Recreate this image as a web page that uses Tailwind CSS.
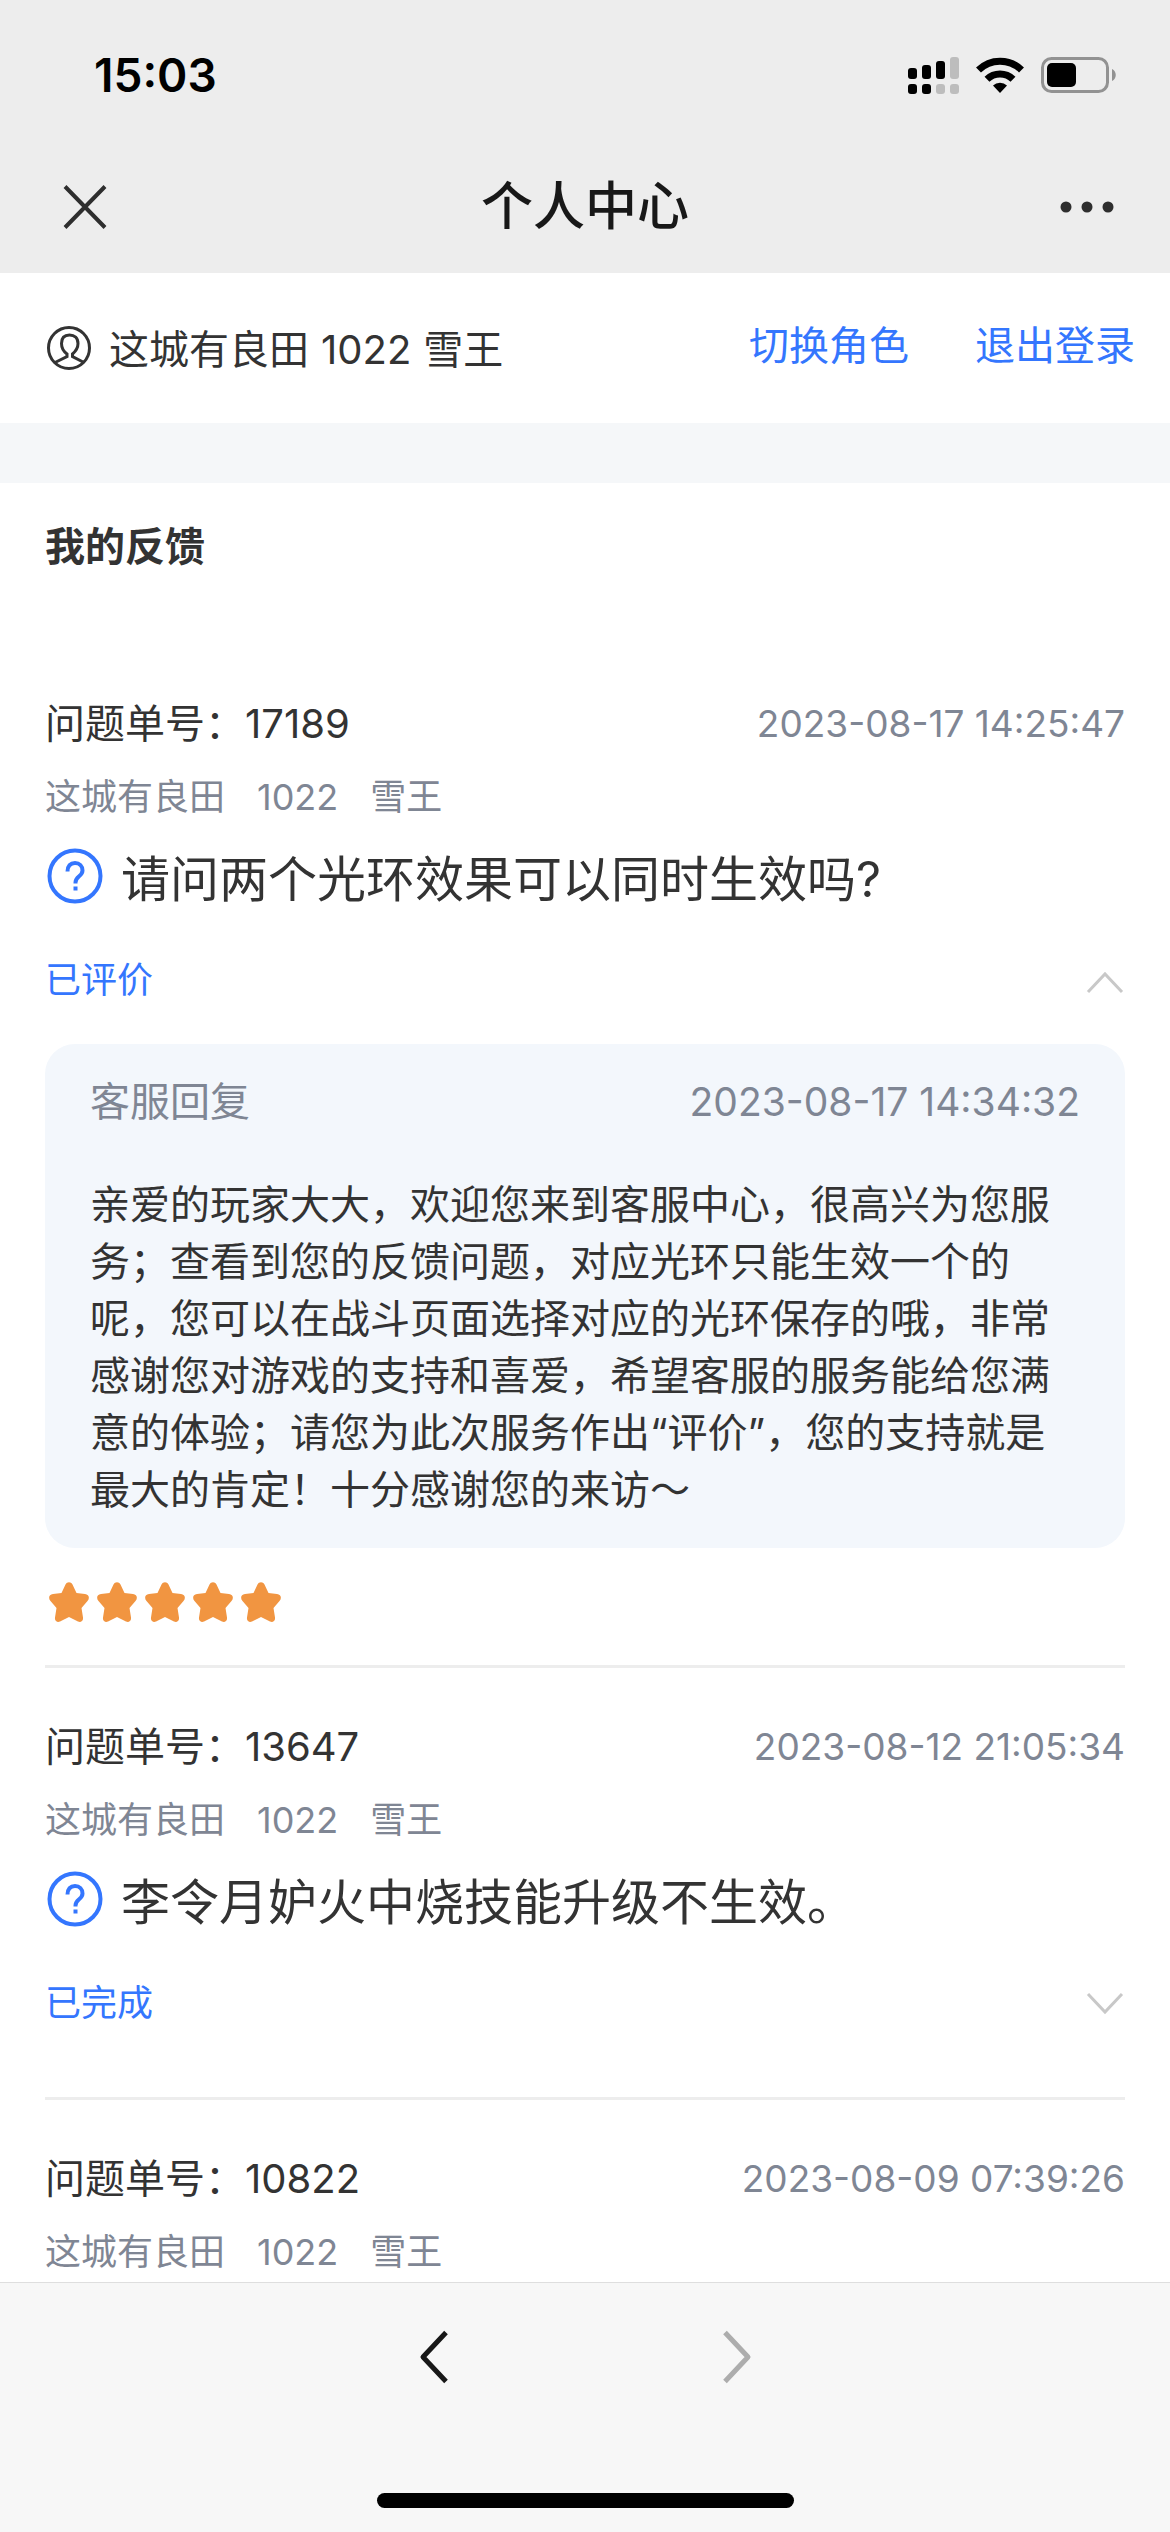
<!DOCTYPE html>
<html lang="zh-CN">
<head>
    <meta charset="UTF-8">
    <meta name="viewport" content="width=device-width, initial-scale=1.0">
    <title>个人中心</title>
    <script src="https://cdn.jsdelivr.net/npm/@tailwindcss/browser@4"></script>
</head>
<body class="h-screen flex flex-col overflow-hidden bg-white text-[#333333] font-['Inter','Noto_Sans_CJK_SC',sans-serif]">

    <!-- Header -->
    <header class="shrink-0 bg-[#ededed]">
        <div class="h-[141px] pt-2 pl-[94px] pr-[54px] flex items-center justify-between">
            <time class="text-[46px] leading-none font-semibold text-black">15:03</time>
            <div class="flex items-center gap-4">
                <svg class="w-[52px] h-[38px]" viewBox="0 0 52 38" fill="#000">
                    <rect x="0" y="12" width="9" height="11" rx="3"/>
                    <rect x="14" y="9" width="9" height="14" rx="3"/>
                    <rect x="28" y="5" width="9" height="18" rx="3"/>
                    <rect x="42" y="1" width="9" height="22" rx="3" fill="#bdbdbd"/>
                    <rect x="0" y="28" width="9" height="10" rx="3"/>
                    <rect x="14" y="28" width="9" height="10" rx="3"/>
                    <rect x="28" y="28" width="9" height="10" rx="3" fill="#bdbdbd"/>
                    <rect x="42" y="28" width="9" height="10" rx="3" fill="#bdbdbd"/>
                </svg>
                <svg class="w-[48px] h-[36px]" viewBox="0 0 48 36">
                    <path d="M2.500 13a30.500 30.500 0 0 1 43 0" fill="none" stroke="#000" stroke-width="7"/>
                    <path d="M11 22.300a18.500 18.500 0 0 1 26 0" fill="none" stroke="#000" stroke-width="7"/>
                    <path d="M24 36l-7-7.500a10 10 0 0 1 14 0z" fill="#000"/>
                </svg>
                <svg class="w-[76px] h-[36px]" viewBox="0 0 76 36">
                    <rect x="2.500" y="1.500" width="65" height="33" rx="9" fill="none" stroke="#929292" stroke-width="3"/>
                    <rect x="7" y="6" width="29" height="24" rx="5" fill="#000"/>
                    <path d="M72 12c5 2 5 10 0 12z" fill="#929292"/>
                </svg>
            </div>
        </div>
        <div class="h-[132px] px-[56px] flex items-center justify-between">
            <button type="button" aria-label="关闭">
                <svg class="w-[56px] h-[56px]" viewBox="0 0 56 56" fill="none" stroke="#2e2e2e" stroke-width="4"><path d="M9 7.500l40 41M49 7.500l-40 41"/></svg>
            </button>
            <h1 class="text-[52px] leading-none font-medium text-[#181818]">个人中心</h1>
            <button type="button" aria-label="更多">
                <svg class="w-[56px] h-[56px]" viewBox="0 0 56 56" fill="#2e2e2e"><circle cx="8" cy="28" r="5.500"/><circle cx="29" cy="28" r="5.500"/><circle cx="50" cy="28" r="5.500"/></svg>
            </button>
        </div>
    </header>

    <main class="flex-1 min-h-0 overflow-hidden">
        <!-- Current role -->
        <div class="h-[150px] pl-[45px] pr-[35px] flex items-center justify-between text-[40px] leading-[56px]">
            <div class="flex items-center gap-[16px]">
                <svg class="w-[48px] h-[48px]" viewBox="0 0 48 48" fill="none" stroke="#333" stroke-width="3">
                    <circle cx="24" cy="24" r="20.500"/>
                    <path d="M10 38.500L22 32.500V30C18 27 16.500 24 16.500 19.500C16.500 14 19.500 11 24.500 11S33 14 33 19.500C33 24 31 27 27.500 30V32.500L39 38.500"/>
                </svg>
                <p class="pt-1 flex gap-[12px]"><span>这城有良田</span><span>1022</span><span>雪王</span></p>
            </div>
            <div class="pb-1 flex gap-[66px] text-[#3476fe]">
                <a href="#">切换角色</a>
                <a href="#">退出登录</a>
            </div>
        </div>

        <div class="h-[60px] bg-[#f5f7f9]"></div>

        <!-- Feedback list -->
        <section class="px-[45px] pt-[34px]">
            <h2 class="mb-[68px] text-[40px] leading-[60px] font-semibold">我的反馈</h2>

            <article class="pt-[51px] pb-[43px] border-b-[3px] border-[#ededed]">
                <div class="flex items-center justify-between">
                    <h3 class="text-[40px] leading-[56px]">问题单号：17189</h3>
                    <time class="text-[37px] leading-[56px] text-[#7f8694]">2023-08-17 14:25:47</time>
                </div>
                <p class="mt-[21px] flex gap-[32px] text-[36px] leading-[48px] text-[#7f8694]"><span>这城有良田</span><span>1022</span><span>雪王</span></p>
                <div class="mt-[26px] flex items-center gap-[16px]">
                    <svg class="w-[60px] h-[64px]" viewBox="0 0 60 64" fill="none" stroke="#3476fe" stroke-width="4">
                        <circle cx="30" cy="28" r="25.500"/>
                        <path d="M22.500 23.500c0-5.500 3-8.500 7.500-8.500s7.500 3 7.500 7.500c0 6-7 5.500-7 12v1M30.500 38.500v4"/>
                    </svg>
                    <p class="text-[49px] leading-[66px]">请问两个光环效果可以同时生效吗?</p>
                </div>
                <div class="mt-[43px] flex items-center justify-between">
                    <span class="text-[36px] leading-[48px] text-[#3476fe]">已评价</span>
                    <button type="button" aria-label="收起">
                        <svg class="w-[40px] h-[40px]" viewBox="0 0 40 40" fill="none" stroke="#c8c8c8" stroke-width="3"><path d="M3 32l17-18 17 18"/></svg>
                    </button>
                </div>
                <div class="mt-[40px] py-[30px] px-[45px] rounded-[30px] bg-[#f3f7fc]">
                    <div class="flex items-center justify-between leading-[56px] text-[#7f8694]">
                        <h4 class="text-[40px]">客服回复</h4>
                        <time class="text-[39px]">2023-08-17 14:34:32</time>
                    </div>
                    <p class="mt-[46px] text-[40px] leading-[57px]">亲爱的玩家大大，欢迎您来到客服中心，很高兴为您服务；查看到您的反馈问题，对应光环只能生效一个的呢，您可以在战斗页面选择对应的光环保存的哦，非常感谢您对游戏的支持和喜爱，希望客服的服务能给您满意的体验；请您为此次服务作出“评价”，您的支持就是最大的肯定！十分感谢您的来访～</p>
                </div>
                <div class="mt-[34px] pl-1 flex gap-[8px]" role="img" aria-label="5 星">
                    <svg class="w-[40px] h-[40px]" viewBox="0 0 40 40" fill="#f19541"><path id="star" d="M16.500 2.500c1.500-3 5.500-3 7 0l4 8.500 8.500 1c4 .5 5 4 2.500 7L32.500 26l1.500 9.500c.5 3.500-2 5.500-5 4L20 35l-9 4.500c-3 1.500-5.500-.5-5-4L7.500 26 1.500 19C-1 16 0 12.500 4 12l8.500-1z"/></svg>
                    <svg class="w-[40px] h-[40px]" viewBox="0 0 40 40" fill="#f19541"><use href="#star"/></svg>
                    <svg class="w-[40px] h-[40px]" viewBox="0 0 40 40" fill="#f19541"><use href="#star"/></svg>
                    <svg class="w-[40px] h-[40px]" viewBox="0 0 40 40" fill="#f19541"><use href="#star"/></svg>
                    <svg class="w-[40px] h-[40px]" viewBox="0 0 40 40" fill="#f19541"><use href="#star"/></svg>
                </div>
            </article>

            <article class="pt-[51px] pb-[70px] border-b-[3px] border-[#ededed]">
                <div class="flex items-center justify-between">
                    <h3 class="text-[40px] leading-[56px]">问题单号：13647</h3>
                    <time class="text-[37px] leading-[56px] text-[#7f8694]">2023-08-12 21:05:34</time>
                </div>
                <p class="mt-[21px] flex gap-[32px] text-[36px] leading-[48px] text-[#7f8694]"><span>这城有良田</span><span>1022</span><span>雪王</span></p>
                <div class="mt-[26px] flex items-center gap-[16px]">
                    <svg class="w-[60px] h-[64px]" viewBox="0 0 60 64" fill="none" stroke="#3476fe" stroke-width="4">
                        <circle cx="30" cy="28" r="25.500"/>
                        <path d="M22.500 23.500c0-5.500 3-8.500 7.500-8.500s7.500 3 7.500 7.500c0 6-7 5.500-7 12v1M30.500 38.500v4"/>
                    </svg>
                    <p class="text-[49px] leading-[66px]">李令月妒火中烧技能升级不生效。</p>
                </div>
                <div class="mt-[43px] flex items-center justify-between">
                    <span class="text-[36px] leading-[48px] text-[#3476fe]">已完成</span>
                    <button type="button" aria-label="展开">
                        <svg class="w-[40px] h-[40px]" viewBox="0 0 40 40" fill="none" stroke="#c8c8c8" stroke-width="3"><path d="M3 11l17 18 17-18"/></svg>
                    </button>
                </div>
            </article>

            <article class="pt-[51px]">
                <div class="flex items-center justify-between">
                    <h3 class="text-[40px] leading-[56px]">问题单号：10822</h3>
                    <time class="text-[37px] leading-[56px] text-[#7f8694]">2023-08-09 07:39:26</time>
                </div>
                <p class="mt-[21px] flex gap-[32px] text-[36px] leading-[48px] text-[#7f8694]"><span>这城有良田</span><span>1022</span><span>雪王</span></p>
            </article>
        </section>
    </main>

    <!-- Browser toolbar -->
    <footer class="shrink-0 h-[250px] pt-[42px] pb-[24px] flex flex-col items-center justify-between bg-[#f7f7f7] border-t border-[#dedede]">
        <nav class="flex gap-[242px]">
            <button type="button" aria-label="后退">
                <svg class="w-[60px] h-[64px]" viewBox="0 0 60 64" fill="none" stroke="#181818" stroke-width="5" stroke-linejoin="round"><path d="M42 7.500l-23 24.500 23 24.500"/></svg>
            </button>
            <button type="button" aria-label="前进" disabled>
                <svg class="w-[60px] h-[64px]" viewBox="0 0 60 64" fill="none" stroke="#adadad" stroke-width="5" stroke-linejoin="round"><path d="M19 7.500l23 24.500-23 24.500"/></svg>
            </button>
        </nav>
        <div class="w-[417px] h-[15px] rounded-full bg-black"></div>
    </footer>

</body>
</html>
